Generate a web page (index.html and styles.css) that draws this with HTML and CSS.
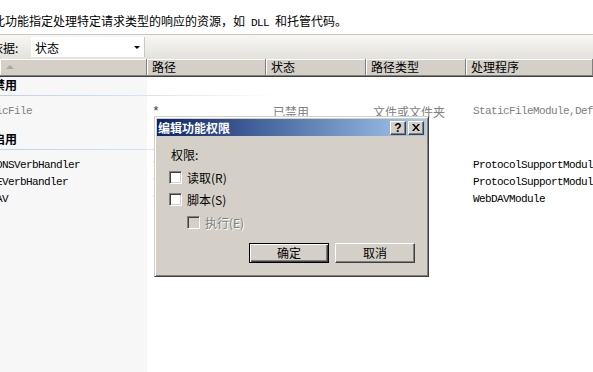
FILE: index.html
```html
<!DOCTYPE html>
<html lang="zh-CN">

<head>
	<meta charset="UTF-8">
	<meta name="viewport" content="width=device-width, initial-scale=1.0">
	<link rel="stylesheet" href="styles.css">
	<title>处理程序映射</title>
</head>

<body>
	<div class="desc"><span class="desc-text">此功能指定处理特定请求类型的响应的资源，如<span class="mono desc-mono"> DLL </span>和托管代码。</span></div>

	<div class="toolbar">
		<span class="toolbar-label">依据:</span>
		<div class="select">
			<span>状态</span>
			<span class="select-arrow"></span>
		</div>
	</div>

	<div class="list">
		<div class="list-head">
			<div class="head-cell head-sort"><span class="sort-arrow"></span></div>
			<div class="head-cell">路径</div>
			<div class="head-cell">状态</div>
			<div class="head-cell">路径类型</div>
			<div class="head-cell">处理程序</div>
		</div>

		<div class="list-body">
			<div class="group"><span>禁用</span></div>
			<div class="rows">
				<div class="row row-off">
					<div class="name mono"><span>StaticFile</span></div>
					<div class="cell-path mono">*</div>
					<div>已禁用</div>
					<div>文件或文件夹</div>
					<div class="mono">StaticFileModule,DefaultDocumentModule</div>
				</div>
			</div>

			<div class="group"><span>启用</span></div>
			<div class="rows">
				<div class="row">
					<div class="name mono"><span>OPTIONSVerbHandler</span></div>
					<div class="cell-path mono">*</div>
					<div>未指定</div>
					<div>未指定</div>
					<div class="mono">ProtocolSupportModule</div>
				</div>
				<div class="row">
					<div class="name mono"><span>TRACEVerbHandler</span></div>
					<div class="cell-path mono">*</div>
					<div>未指定</div>
					<div>未指定</div>
					<div class="mono">ProtocolSupportModule</div>
				</div>
				<div class="row">
					<div class="name mono"><span>WebDAV</span></div>
					<div class="cell-path mono">*</div>
					<div>未指定</div>
					<div>未指定</div>
					<div class="mono">WebDAVModule</div>
				</div>
			</div>
		</div>
	</div>

	<!-- 编辑功能权限 -->
	<div class="dialog">
		<div class="dialog-title">
			<span class="dialog-caption">编辑功能权限</span>
			<span class="title-btn title-help">?</span>
			<span class="title-btn title-close">
				<svg width="8" height="7" viewBox="0 0 8 7">
					<path d="M0 0h2l2 2.5 2-2.5h2l-3 3.5 3 3.5h-2l-2-2.5-2 2.5h-2l3-3.5z" fill="#000" />
				</svg>
			</span>
		</div>
		<div class="dialog-body">
			<div class="perm-label">权限:</div>
			<div class="check-row">
				<span class="checkbox"></span>
				<span class="check-label">读取(R)</span>
			</div>
			<div class="check-row">
				<span class="checkbox"></span>
				<span class="check-label">脚本(S)</span>
			</div>
			<div class="check-row check-disabled">
				<span class="checkbox"></span>
				<span class="check-label">执行(E)</span>
			</div>
			<div class="dialog-buttons">
				<button class="btn btn-default" type="button">确定</button>
				<button class="btn" type="button">取消</button>
			</div>
		</div>
	</div>
</body>

</html>
```

FILE: styles.css
```css
* {
	box-sizing: border-box;
	margin: 0;
	padding: 0;
}

body {
	height: 100vh;
	display: flex;
	flex-direction: column;
	overflow: hidden;
	background: #fff;
	color: #000;
	font-family: "Noto Sans CJK SC", sans-serif;
	font-size: 12px;
}

.mono {
	font-family: "Liberation Mono", "Noto Sans CJK SC", monospace;
	font-size: 11px;
	letter-spacing: -0.6px;
}

.desc {
	height: 34px;
	padding-top: 14px;
	line-height: 14px;
	white-space: nowrap;
}

.desc-text {
	display: inline-block;
	margin-left: -7px;
}

.desc-mono {
	white-space: pre;
}

.toolbar {
	height: 25px;
	display: flex;
	align-items: center;
	border-top: 1px solid #c9c7c1;
	background: linear-gradient(#f8f7f4, #e3e1db);
}

.toolbar-label {
	width: 40px;
	margin-left: -9px;
	white-space: nowrap;
}

.select {
	width: 114px;
	height: 20px;
	display: flex;
	align-items: center;
	padding-left: 4px;
	background: #fff;
	border-right: 1px solid #c8c8c8;
}

.select-arrow {
	margin-left: auto;
	margin-right: 4px;
	border-left: 3px solid transparent;
	border-right: 3px solid transparent;
	border-top: 3px solid #000;
}

.list {
	flex: 1;
	display: flex;
	flex-direction: column;
}

.list-head {
	height: 18px;
	display: grid;
	grid-template-columns: 147px 119px 100px 100px 1fr;
	background: #d4d0c8;
	border-bottom: 1px solid #404040;
}

.head-cell {
	padding-left: 5px;
	line-height: 16px;
	white-space: nowrap;
	border-right: 1px solid #808080;
	border-bottom: 1px solid #808080;
	box-shadow: inset 1px 1px #fff;
}

.head-sort {
	display: flex;
	align-items: center;
}

.sort-arrow {
	margin-left: 1px;
	border-left: 4px solid transparent;
	border-right: 4px solid transparent;
	border-bottom: 4px solid #aaa8a2;
}

.list-body {
	flex: 1;
	background: linear-gradient(to right, #f7f7f7 147px, #fff 147px);
}

.group {
	height: 19px;
	line-height: 16px;
	font-weight: bold;
	white-space: nowrap;
	overflow: hidden;
	background: linear-gradient(to right, #bcd3ee, #d6e4f5 150px, #fff 280px) left bottom / 100% 1px no-repeat;
}

.group span {
	display: inline-block;
	margin-left: -7px;
}

.rows {
	padding: 7px 0 11px;
}

.row {
	height: 17px;
	display: grid;
	grid-template-columns: 147px 119px 100px 100px 1fr;
	line-height: 17px;
	white-space: nowrap;
}

.row > div {
	overflow: hidden;
	padding-left: 7px;
}

.row .name {
	padding-left: 0;
}

.name span {
	display: inline-block;
	margin-left: -28px;
}

.row .cell-path {
	padding-left: 5px;
	font-size: 13px;
	color: #404040;
}

.row-off {
	color: #808080;
}

.dialog {
	position: absolute;
	left: 154px;
	top: 116px;
	width: 275px;
	height: 161px;
	display: flex;
	flex-direction: column;
	padding: 2px;
	background: #d4d0c8;
	border: 1px solid;
	border-color: #d4d0c8 #404040 #404040 #d4d0c8;
	box-shadow: inset 1px 1px #fff, inset -1px -1px #808080;
}

.dialog-title {
	height: 17px;
	display: flex;
	align-items: center;
	gap: 2px;
	padding: 0 2px 0 1px;
	background: linear-gradient(to right, #0a246a, #a6caf0);
	color: #fff;
	font-weight: bold;
}

.dialog-caption {
	flex: 1;
	line-height: 14px;
}

.title-btn {
	width: 16px;
	height: 14px;
	display: flex;
	align-items: center;
	justify-content: center;
	background: #d4d0c8;
	color: #000;
	border: 1px solid;
	border-color: #fff #404040 #404040 #fff;
	box-shadow: inset -1px -1px #808080;
}

.title-help {
	font-family: "Liberation Sans", sans-serif;
	font-size: 12px;
	line-height: 12px;
	font-weight: bold;
}

.dialog-body {
	flex: 1;
	padding: 12px 0 0 12px;
}

.perm-label {
	margin-left: 2px;
	line-height: 14px;
}

.check-row {
	height: 13px;
	display: flex;
	align-items: center;
	margin-top: 9px;
}

.check-disabled {
	margin-top: 10px;
	margin-left: 18px;
}

.checkbox {
	width: 13px;
	height: 13px;
	background: #fff;
	border: 1px solid;
	border-color: #808080 #fff #fff #808080;
	box-shadow: inset 1px 1px #404040, inset -1px -1px #d4d0c8;
}

.check-label {
	margin-left: 5px;
	line-height: 14px;
	white-space: nowrap;
}

.check-disabled .checkbox {
	background: #d4d0c8;
}

.check-disabled .check-label {
	color: #808080;
	text-shadow: 1px 1px #fff;
}

.dialog-buttons {
	display: flex;
	justify-content: flex-end;
	gap: 6px;
	margin-top: 14px;
	padding-right: 11px;
}

.btn {
	width: 80px;
	height: 20px;
	background: #d4d0c8;
	color: #000;
	font: inherit;
	line-height: 16px;
	border: 1px solid;
	border-color: #fff #404040 #404040 #fff;
	box-shadow: inset -1px -1px #808080;
}

.btn-default {
	border-color: #000;
	box-shadow: inset 1px 1px #fff, inset -1px -1px #404040, inset -2px -2px #808080;
}
```
